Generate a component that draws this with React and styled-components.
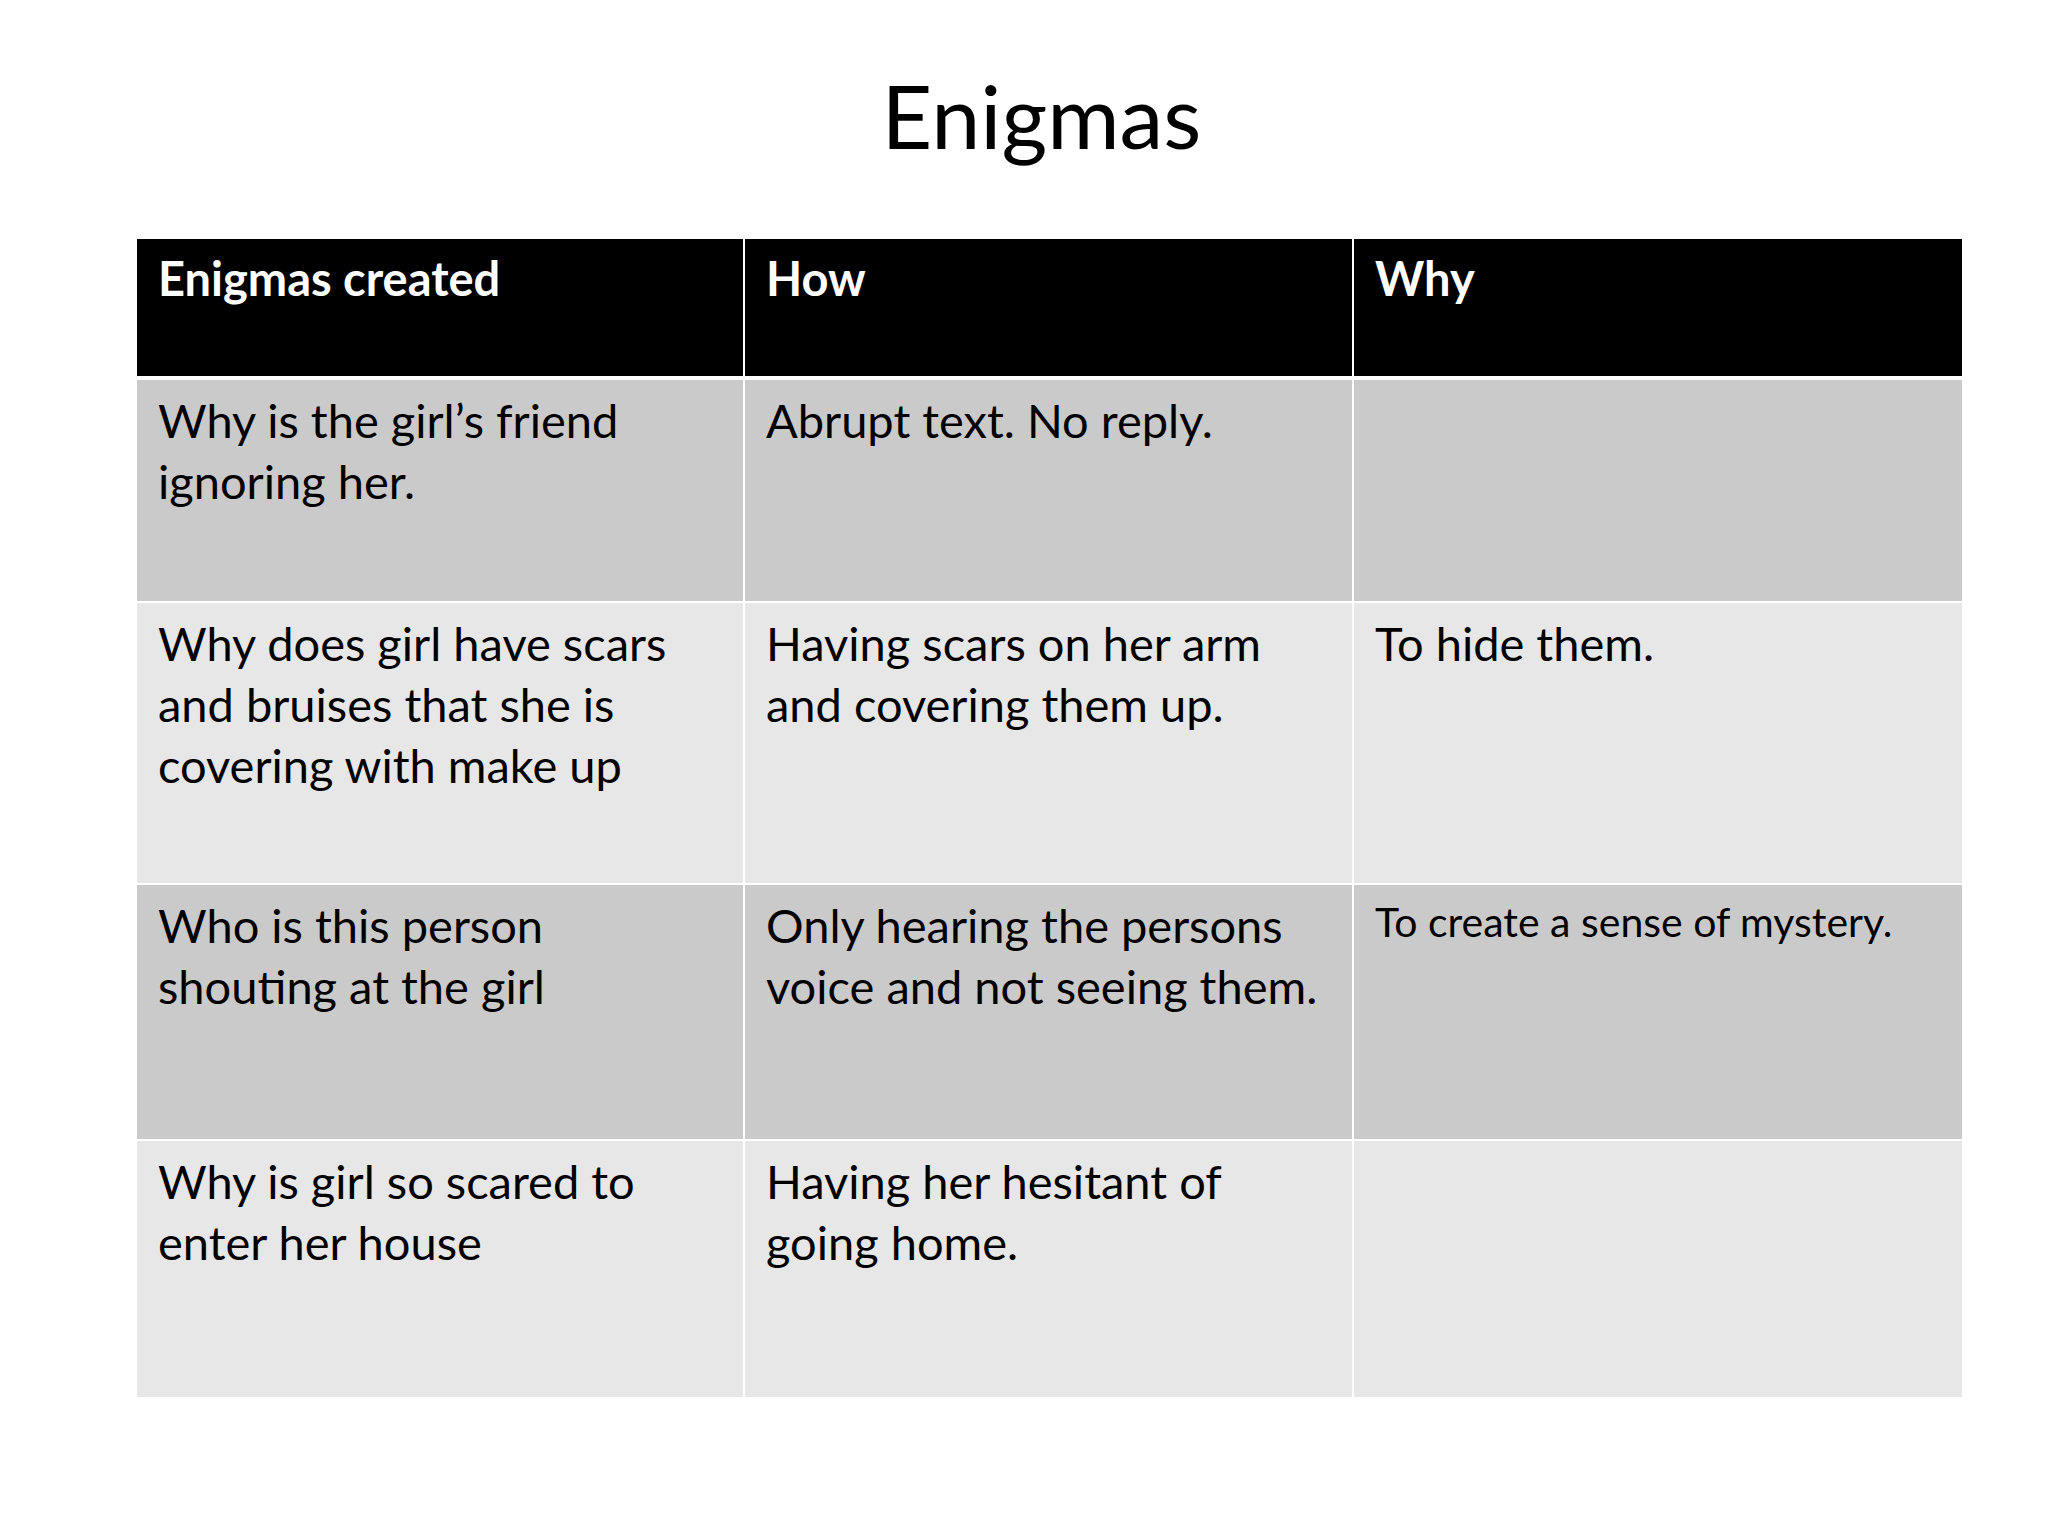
import styled, { createGlobalStyle } from 'styled-components';

const GlobalStyle = createGlobalStyle`
  html, body {
    margin: 0;
    padding: 0;
    background: #ffffff;
  }
  body {
    font-family: Lato, "Open Sans", sans-serif;
    color: #000;
  }
`;

const rows = [
  {
    height: 221,
    shade: 'dark',
    cells: ['Why is the girl’s friend ignoring her.', 'Abrupt text. No reply.', ''],
  },
  {
    height: 280,
    shade: 'light',
    cells: [
      'Why does girl have scars and bruises that she is covering with make up',
      'Having scars on her arm and covering them up.',
      'To hide them.',
    ],
  },
  {
    height: 254,
    shade: 'dark',
    cells: [
      'Who is this person shouting at the girl',
      'Only hearing the persons voice and not seeing them.',
      'To create a sense of mystery.',
    ],
    smallLast: true,
  },
  {
    height: 256,
    shade: 'light',
    cells: ['Why is girl so scared to enter her house', 'Having her hesitant of going home.', ''],
  },
];

export default function App() {
  return (
    <>
      <GlobalStyle />
      <Slide>
        <Title>Enigmas</Title>
        <Table>
          <HeaderRow>
            <HeaderCell>Enigmas created</HeaderCell>
            <HeaderCell>How</HeaderCell>
            <HeaderCell>Why</HeaderCell>
          </HeaderRow>
          {rows.map((row, i) => (
            <Row key={i} $height={row.height}>
              {row.cells.map((text, j) => (
                <Cell
                  key={j}
                  $shade={row.shade}
                  $small={row.smallLast && j === 2}
                >
                  {text}
                </Cell>
              ))}
            </Row>
          ))}
        </Table>
      </Slide>
    </>
  );
}

const Slide = styled.div`
  width: 2048px;
  height: 1536px;
  box-sizing: border-box;
  padding: 60px 86px 0 137px;
  display: flex;
  flex-direction: column;
`;

const Title = styled.h1`
  margin: 0;
  height: 179px;
  text-align: center;
  font-family: Lato, "Open Sans", sans-serif;
  font-weight: 400;
  font-size: 88px;
  line-height: 110px;
  color: #000;
  padding-right: 16px;
`;

const Table = styled.div`
  display: flex;
  flex-direction: column;
  gap: 2px;
  width: 1825px;
  background: #ffffff;
`;

const HeaderRow = styled.div`
  display: grid;
  grid-template-columns: 606px 607px 608px;
  column-gap: 2px;
  height: 137px;
  margin-bottom: 2px;
`;

const HeaderCell = styled.div`
  background: #000000;
  color: #ffffff;
  font-weight: 700;
  font-size: 47px;
  line-height: 61px;
  padding: 9px 24px 0 21px;
`;

const Row = styled.div`
  display: grid;
  grid-template-columns: 606px 607px 608px;
  column-gap: 2px;
  height: ${p => p.$height}px;
`;

const Cell = styled.div`
  background: ${p => (p.$shade === 'dark' ? '#cacaca' : '#e7e7e7')};
  color: #000;
  font-weight: 400;
  font-size: ${p => (p.$small ? '41px' : '47px')};
  line-height: 61px;
  padding: ${p => (p.$small ? '6px' : '10px')} 24px 0 21px;
`;
